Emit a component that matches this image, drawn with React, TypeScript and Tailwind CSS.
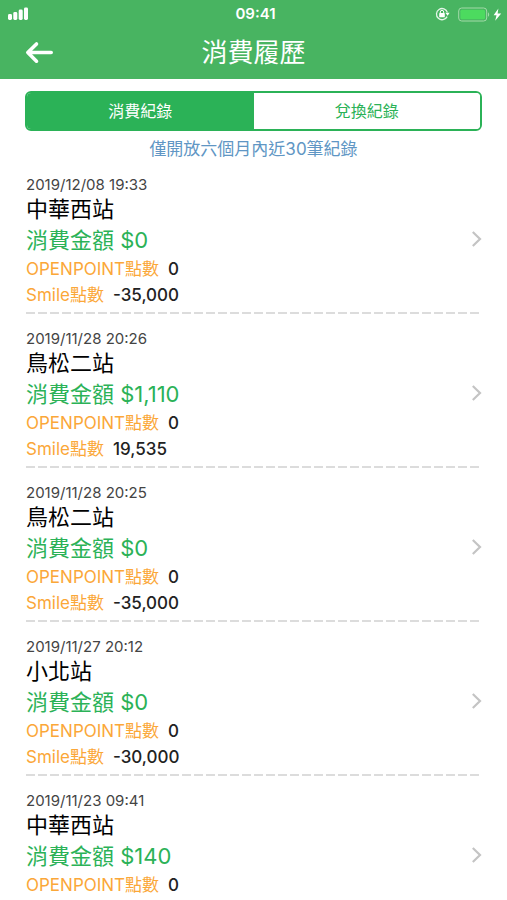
import React, { useState } from 'react';

interface PurchaseRecord {
  time: string;
  station: string;
  amount: string;
  openPoint: string;
  smile?: string;
}

const RECORDS: PurchaseRecord[] = [
  { time: '2019/12/08 19:33', station: '中華西站', amount: '$0', openPoint: '0', smile: '-35,000' },
  { time: '2019/11/28 20:26', station: '鳥松二站', amount: '$1,110', openPoint: '0', smile: '19,535' },
  { time: '2019/11/28 20:25', station: '鳥松二站', amount: '$0', openPoint: '0', smile: '-35,000' },
  { time: '2019/11/27 20:12', station: '小北站', amount: '$0', openPoint: '0', smile: '-30,000' },
  { time: '2019/11/23 09:41', station: '中華西站', amount: '$140', openPoint: '0' },
];

const TABS = ['消費紀錄', '兌換紀錄'];

function StatusBar() {
  return (
    <div className="grid grid-cols-3 items-center h-7 pl-2 pr-1">
      <svg width="21" height="14" viewBox="0 0 21 14" fill="#fff" aria-hidden="true">
        <rect x="0" y="7" width="4" height="6" rx="1.4" />
        <rect x="5.3" y="5" width="4" height="8" rx="1.4" />
        <rect x="10.7" y="2.6" width="4" height="10.4" rx="1.4" />
        <rect x="16" y="0.5" width="4" height="12.5" rx="1.4" />
      </svg>
      <span className="text-center text-[15px] font-semibold leading-7">09:41</span>
      <div className="flex items-center justify-end gap-2">
        {/* Rotation lock */}
        <svg width="15" height="14" viewBox="0 0 15 14" fill="none" aria-hidden="true">
          <path d="M12.1 9.6A5.6 5.6 0 1 1 12.4 5.4" stroke="#e4f5e8" strokeWidth="1.3" />
          <path d="M10.4 5.8h4.2l-2 3z" fill="#fff" />
          <rect x="4.2" y="6.1" width="5.6" height="4.2" rx="0.6" fill="#fff" />
          <path d="M5.3 6.4V5a1.7 1.7 0 0 1 3.4 0v1.4" stroke="#fff" strokeWidth="1" />
        </svg>
        {/* Battery, charging */}
        <svg width="45" height="15" viewBox="0 0 45 15" aria-hidden="true">
          <rect x="0.7" y="1" width="28" height="13" rx="3" fill="none" stroke="#a3dba9" strokeWidth="1" />
          <rect x="2.4" y="2.7" width="24.6" height="9.6" rx="1.5" fill="#4cdb5f" />
          <path d="M30 5.2c1.6.8 1.6 3.8 0 4.6z" fill="#a3dba9" />
          <path d="M40.4 1.4 35.6 8.2h2.9l-1.3 5.6 6-7.4h-3.6z" fill="#fff" />
        </svg>
      </div>
    </div>
  );
}

function RecordItem({ record }: { record: PurchaseRecord }) {
  return (
    <li>
      <button type="button" className="flex w-full items-start justify-between pb-1 text-left">
        <div>
          <p className="text-[15px] leading-5 text-[#444]">{record.time}</p>
          <p className="text-[22px] leading-[29px] text-black">{record.station}</p>
          <p className="text-[22px] leading-8 text-[#2bb257]">消費金額 {record.amount}</p>
          <p className="text-[17px] leading-[26px]">
            <span className="mr-[9px] text-[#fba738]">OPENPOINT點數</span>
            <span className="font-medium text-[#222]">{record.openPoint}</span>
          </p>
          {record.smile && (
            <p className="text-[17px] leading-[26px]">
              <span className="mr-[9px] text-[#fba738]">Smile點數</span>
              <span className="font-medium text-[#222]">{record.smile}</span>
            </p>
          )}
        </div>
        <svg className="mt-[55px]" width="11" height="18" viewBox="0 0 11 18" fill="none" aria-hidden="true">
          <path d="M1.8 2 9 9l-7.2 7" stroke="#c4c4c4" strokeWidth="2.2" />
        </svg>
      </button>
      {record.smile && (
        <div className="h-0.5 bg-[repeating-linear-gradient(90deg,#dcdcdc_0_9px,transparent_9px_12px)]" />
      )}
    </li>
  );
}

export default function App() {
  const [activeTab, setActiveTab] = useState(TABS[0]);

  return (
    <div className="min-h-screen bg-white font-['Inter','Noto_Sans_CJK_TC',sans-serif]">
      <header className="bg-[#48b461] text-white">
        <StatusBar />
        <div className="grid grid-cols-[40px_1fr_40px] items-center px-6 pt-px pb-[3px]">
          <button type="button" aria-label="返回">
            <svg width="30" height="24" viewBox="0 0 30 24" fill="none" aria-hidden="true">
              <path
                d="M12.5 3 3.8 11.5l8.7 8.7M3.8 11.5h23.4"
                stroke="#fff"
                strokeWidth="3.6"
                strokeLinecap="round"
                strokeLinejoin="round"
              />
            </svg>
          </button>
          <h1 className="text-center text-[26px] leading-[47px]">消費履歷</h1>
        </div>
      </header>

      <main className="px-[25px] pt-3">
        <div className="flex h-10 overflow-hidden rounded-md border-2 border-[#2bb257]">
          {TABS.map((tab) => (
            <button
              key={tab}
              type="button"
              aria-pressed={tab === activeTab}
              onClick={() => setActiveTab(tab)}
              className={`flex-1 text-base ${
                tab === activeTab ? 'bg-[#2bb257] text-white' : 'bg-white text-[#2bb257]'
              }`}
            >
              {tab}
            </button>
          ))}
        </div>
        <p className="text-center text-[17px] leading-9 text-[#6096c4]">僅開放六個月內近30筆紀錄</p>

        <ul className="mt-2 flex flex-col gap-[15px] pl-px">
          {RECORDS.map((record) => (
            <RecordItem key={record.time} record={record} />
          ))}
        </ul>
      </main>
    </div>
  );
}
